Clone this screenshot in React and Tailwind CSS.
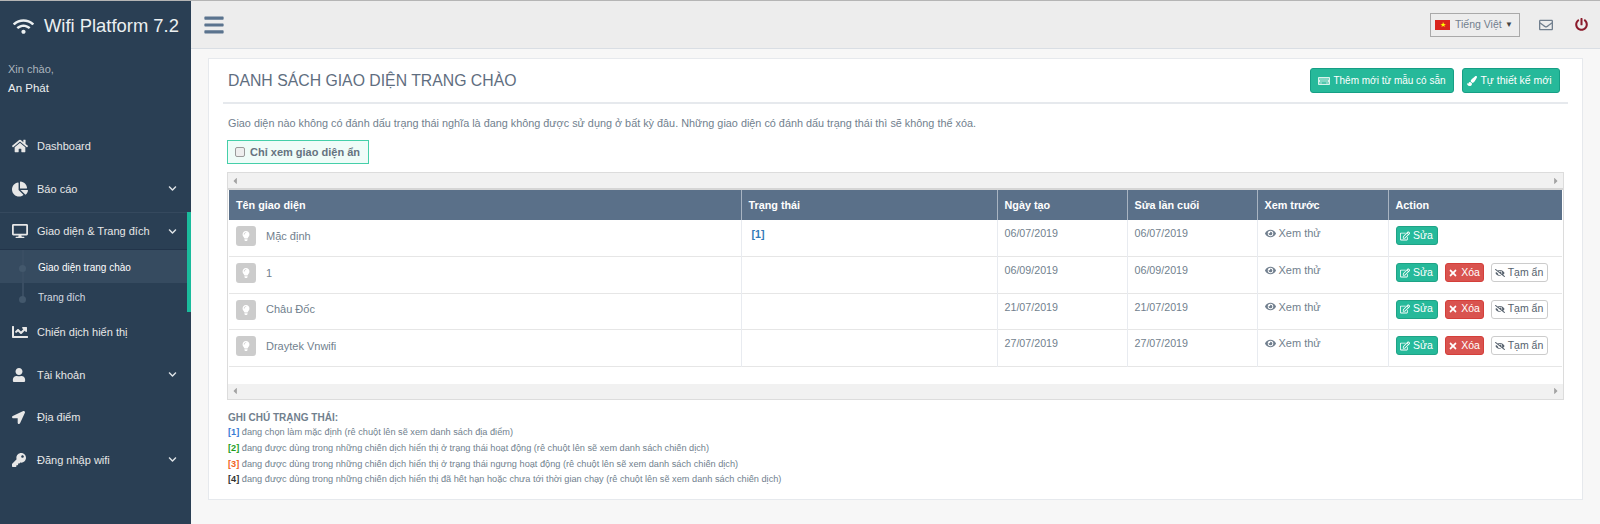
import React from "react";
import {
  FaWifi,
  FaHome,
  FaChartPie,
  FaDesktop,
  FaChevronDown,
  FaChartLine,
  FaUser,
  FaLocationArrow,
  FaKey,
  FaBars,
  FaRegEnvelope,
  FaPowerOff,
  FaKeyboard,
  FaPaintBrush,
  FaRegEdit,
  FaTimes,
  FaEye,
  FaEyeSlash,
  FaLightbulb,
  FaCaretLeft,
  FaCaretRight,
} from "react-icons/fa";

const rows = [
  { name: "Mặc định", status: "[1]", created: "06/07/2019", edited: "06/07/2019", locked: true },
  { name: "1", status: "", created: "06/09/2019", edited: "06/09/2019" },
  { name: "Châu Đốc", status: "", created: "21/07/2019", edited: "21/07/2019" },
  { name: "Draytek Vnwifi", status: "", created: "27/07/2019", edited: "27/07/2019" },
];

function MenuItem({ icon: Icon, label, chevron, size = "text-[16px]" }) {
  return (
    <div className="h-[42.5px] flex items-center pl-3 pr-[14px] text-[11px] text-[#e7e7e7]">
      <span className={`w-[25px] flex justify-start ${size}`}>
        <Icon />
      </span>
      <span>{label}</span>
      {chevron && <FaChevronDown className="ml-auto text-[9px] text-[#dfe3e7]" />}
    </div>
  );
}

function ScrollBar() {
  return (
    <div className="h-[15px] bg-[#f1f1f1] flex items-center justify-between px-[2px] text-[10px] text-[#a3a3a3]">
      <FaCaretLeft />
      <FaCaretRight />
    </div>
  );
}

function ActionButton({ tone, icon: Icon, label }) {
  const tones = {
    green: "bg-[#26b99a] border-[#1fa386] text-white w-[42px]",
    red: "bg-[#d9534f] border-[#d43f3a] text-white w-[39px]",
    plain: "bg-white border-[#cccccc] text-[#56616d] w-[57px]",
  };
  return (
    <span className={`h-[19px] flex items-center justify-center gap-[3px] rounded-[3px] border text-[10.5px] whitespace-nowrap ${tones[tone]}`}>
      <Icon className="text-[10px]" />
      {label}
    </span>
  );
}

export default function App() {
  return (
    <div className="h-screen overflow-hidden flex flex-col bg-[#f7f7f7] text-[#717f8e] font-['Liberation_Sans',Arial,sans-serif]">
      <div className="h-px shrink-0 bg-[#b5b5b5]" />
      <div className="flex-1 flex min-h-0">
        {/* Sidebar */}
        <aside className="w-[191px] shrink-0 bg-[#2a3f54] text-[#ecf0f1]">
          <div className="h-[50px] flex items-center pl-[13px] text-[#ecf0f1]">
            <FaWifi className="text-[21px] mr-[10px]" />
            <span className="text-[18.4px] whitespace-nowrap">Wifi Platform 7.2</span>
          </div>
          <div className="pl-2 pt-[10px] h-[74px]">
            <div className="text-[11px] leading-[17px] text-[#aab4be]">Xin chào,</div>
            <div className="text-[11.5px] leading-[17px] mt-[2px] text-[#ecf0f1]">An Phát</div>
          </div>
          <MenuItem icon={FaHome} label="Dashboard" />
          <MenuItem icon={FaChartPie} label="Báo cáo" chevron />
          <div className="border-r-4 border-[#1abb9c] h-[100px] mt-[2px] -mb-px">
            <div className="h-[38px] flex items-center pl-3 pr-[10px] text-[11px] text-[#e7e7e7] border-b border-b-[#22344a] border-t border-t-[#35495e]">
              <FaDesktop className="text-[16px] mr-[9px]" />
              <span>Giao diện &amp; Trang đích</span>
              <FaChevronDown className="ml-auto text-[9px] text-[#dfe3e7]" />
            </div>
            <div className="relative">
              <div className="absolute left-[22px] top-0 h-[47px] w-[2px] bg-[#3a4e63]" />
              <div className="h-[33px] flex items-center pl-[38px] pt-[2px] text-[10px] text-white bg-[#364b60]">
                <span className="absolute left-[19px] top-[15px] size-[7px] rounded-full bg-[#43586c]" />
                Giao diện trang chào
              </div>
              <div className="h-[29px] flex items-center pl-[38px] text-[10px] text-[#d5dbe1]">
                <span className="absolute left-[19px] top-[46px] size-[7px] rounded-full bg-[#43586c]" />
                Trang đích
              </div>
            </div>
          </div>
          <MenuItem icon={FaChartLine} label="Chiến dịch hiển thị" />
          <MenuItem icon={FaUser} label="Tài khoản" chevron size="text-[14px]" />
          <MenuItem icon={FaLocationArrow} label="Địa điểm" size="text-[13px]" />
          <MenuItem icon={FaKey} label="Đăng nhập wifi" chevron size="text-[14px]" />
        </aside>

        <div className="flex-1 min-w-0 flex flex-col">
          {/* Top bar */}
          <header className="h-[48px] shrink-0 bg-[#ededed] border-b border-[#d9dee4] flex items-center pl-[12px]">
            <FaBars className="text-[22px] text-[#5a738e]" />
            <div className="ml-auto flex items-center">
              <div className="w-[90px] h-[24px] border border-[#a9a9a9] flex items-center pl-[4px] pr-[6px] text-[10.5px] text-[#717f8e]">
                <span className="w-[15px] h-[10px] bg-[#da251d] flex items-center justify-center text-[7px] leading-none text-[#ffff00] mr-[5px]">★</span>
                <span>Tiếng Việt</span>
                <span className="ml-auto text-[8px] text-[#444]">▼</span>
              </div>
              <FaRegEnvelope className="ml-[19px] text-[14px] text-[#717f8e]" />
              <FaPowerOff className="ml-[22px] mr-[12px] text-[13px] text-[#8b1a2b]" />
            </div>
          </header>

          {/* Main */}
          <main className="flex-1 pt-[9px] pl-[17px] pr-[17px]">
            <div className="h-[442px] bg-white border border-[#e6e9ed] px-[14px]">
              <div className="h-[45px] flex items-center border-b-2 border-[#e6e9ed] pl-[5px] pr-[8px]">
                <h2 className="mt-px text-[15.8px] text-[#5f6e80] whitespace-nowrap">DANH SÁCH GIAO DIỆN TRANG CHÀO</h2>
                <div className="ml-auto flex gap-2">
                  <button className="h-[25px] w-[144px] flex items-center justify-center gap-[3px] rounded-[3px] bg-[#26b99a] border border-[#169f85] text-white text-[10px] whitespace-nowrap">
                    <FaKeyboard className="text-[12px] text-[#d8f3ec]" />
                    Thêm mới từ mẫu có sẵn
                  </button>
                  <button className="h-[25px] w-[98px] flex items-center justify-center gap-[3px] rounded-[3px] bg-[#26b99a] border border-[#169f85] pr-[3px] text-white text-[10.5px] whitespace-nowrap">
                    <FaPaintBrush className="text-[10px]" />
                    Tự thiết kế mới
                  </button>
                </div>
              </div>

              <p className="pl-[5px] mt-[11px] text-[10.85px] leading-[16px]">
                Giao diện nào không có đánh dấu trạng thái nghĩa là đang không được sử dụng ở bất kỳ đâu. Những giao diện có đánh dấu trạng thái thì sẽ không thể xóa.
              </p>

              <label className="ml-[4px] mt-[9px] w-[142px] h-[24px] flex items-center gap-[5px] pl-[7px] bg-[#effcf8] border border-[#45cfa9] text-[11px] font-bold whitespace-nowrap text-[#66737f]">
                <input type="checkbox" className="size-[10px] appearance-none rounded-[2px] border border-[#9a9a9a] bg-[#eeeeee]" />
                Chỉ xem giao diện ẩn
              </label>

              <div className="ml-[4px] mt-[8px] w-[1337px] border border-[#dcdcdc]">
                <ScrollBar />
                <div className="h-[2px] bg-[#d5d5d5]" />
                <div className="px-px">
                  <table className="w-full table-fixed border-collapse text-[10.7px]">
                    <colgroup>
                      <col className="w-[512px]" />
                      <col className="w-[256px]" />
                      <col className="w-[130px]" />
                      <col className="w-[130px]" />
                      <col className="w-[131px]" />
                      <col />
                    </colgroup>
                    <thead>
                      <tr className="h-[30px] bg-[#5a7089] text-white text-[10.8px] font-bold text-left">
                        {["Tên giao diện", "Trạng thái", "Ngày tạo", "Sửa lần cuối", "Xem trước", "Action"].map((h) => (
                          <th key={h} className="pl-[7px] border-r border-[#a8b4c2] last:border-r-0">
                            {h}
                          </th>
                        ))}
                      </tr>
                    </thead>
                    <tbody>
                      {rows.map((r) => (
                        <tr key={r.name} className="h-[36.5px] border-b border-[#e6e6e6] align-top">
                          <td className="pl-[7px] pt-[6px] border-r border-[#e8ebf0]">
                            <div className="flex items-center text-[11px]">
                              <span className="size-[20px] rounded-[3px] bg-[#cccccc] flex items-center justify-center text-white text-[10px]">
                                <FaLightbulb />
                              </span>
                              <span className="ml-[10px]">{r.name}</span>
                            </div>
                          </td>
                          <td className="pl-[10px] pt-[6px] border-r border-[#e8ebf0] font-bold text-[#337ab7]">{r.status}</td>
                          <td className="pl-[7px] pt-[5px] border-r border-[#e8ebf0]">{r.created}</td>
                          <td className="pl-[7px] pt-[5px] border-r border-[#e8ebf0]">{r.edited}</td>
                          <td className="pl-[7px] pt-[5px] border-r border-[#e8ebf0]">
                            <span className="flex items-center gap-[3px] text-[11px]">
                              <FaEye className="text-[11px]" />
                              Xem thử
                            </span>
                          </td>
                          <td className="pl-[7px] pt-[6px]">
                            <div className="flex items-center gap-[7px]">
                              <ActionButton tone="green" icon={FaRegEdit} label="Sửa" />
                              {!r.locked && <ActionButton tone="red" icon={FaTimes} label="Xóa" />}
                              {!r.locked && <ActionButton tone="plain" icon={FaEyeSlash} label="Tạm ẩn" />}
                            </div>
                          </td>
                        </tr>
                      ))}
                    </tbody>
                  </table>
                </div>
                <div className="h-[17px]" />
                <ScrollBar />
              </div>

              <div className="pl-[5px] mt-[10px] text-[9.2px] leading-[15.7px]">
                <div className="font-bold text-[10px]">GHI CHÚ TRẠNG THÁI:</div>
                <div><b className="text-[#3a7bd5]">[1]</b> đang chọn làm mặc định (rê chuột lên sẽ xem danh sách địa điểm)</div>
                <div><b className="text-[#1e9e1e]">[2]</b> đang được dùng trong những chiến dịch hiển thị ở trạng thái hoạt động (rê chuột lên sẽ xem danh sách chiến dịch)</div>
                <div><b className="text-[#f26522]">[3]</b> đang được dùng trong những chiến dịch hiển thị ở trạng thái ngưng hoạt động (rê chuột lên sẽ xem danh sách chiến dịch)</div>
                <div><b className="text-[#333333]">[4]</b> đang được dùng trong những chiến dịch hiển thị đã hết hạn hoặc chưa tới thời gian chạy (rê chuột lên sẽ xem danh sách chiến dịch)</div>
              </div>
            </div>
          </main>
        </div>
      </div>
    </div>
  );
}
